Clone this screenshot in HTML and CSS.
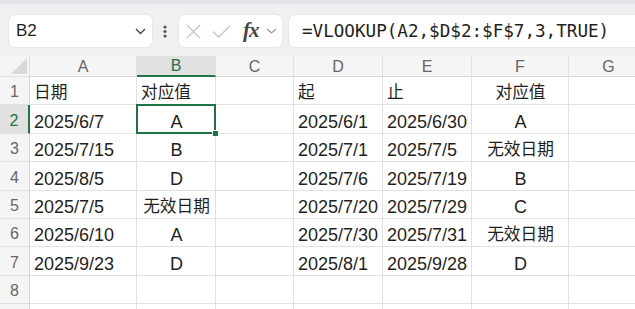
FILE: index.html
```html
<!DOCTYPE html>
<html lang="zh-CN">
<head>
  <meta charset="UTF-8">
  <meta name="viewport" content="width=device-width, initial-scale=1.0">
  <title>VLOOKUP</title>
  <link rel="stylesheet" href="styles.css">
</head>
<body>
  <!-- Formula bar -->
  <div class="toolbar">
    <div class="namebox">
      <span>B2</span>
      <svg width="11" height="7" viewBox="0 0 11 7"><polyline points="1,1 5.5,5.5 10,1" fill="none" stroke="#444" stroke-width="1.3"/></svg>
    </div>
    <svg class="dots" width="4" height="13" viewBox="0 0 4 13"><circle cx="2" cy="2" r="1.6" fill="#555"/><circle cx="2" cy="6.5" r="1.6" fill="#555"/><circle cx="2" cy="11" r="1.6" fill="#555"/></svg>
    <div class="fxbox">
      <svg width="15" height="15" viewBox="0 0 15 15"><path d="M1 1 L14 14 M14 1 L1 14" stroke="#c4c4c4" stroke-width="1.3" fill="none"/></svg>
      <svg width="19" height="13" viewBox="0 0 19 13"><polyline points="1,6.5 6.5,12 18,1" fill="none" stroke="#c4c4c4" stroke-width="1.3"/></svg>
      <span class="fx">fx</span>
      <svg width="11" height="6" viewBox="0 0 11 6"><polyline points="1,1 5.5,5 10,1" fill="none" stroke="#999" stroke-width="1.2"/></svg>
    </div>
    <div class="formula">=VLOOKUP(A2,$D$2:$F$7,3,TRUE)</div>
  </div>

  <!-- Sheet -->
  <div class="sheet">
    <div class="corner"><svg width="16" height="16" viewBox="0 0 16 16"><polygon points="16,0 16,16 0,16" fill="#d9d9d9"/></svg></div>
    <div class="colhead">A</div>
    <div class="colhead sel">B</div>
    <div class="colhead">C</div>
    <div class="colhead">D</div>
    <div class="colhead">E</div>
    <div class="colhead">F</div>
    <div class="colhead">G</div>

    <div class="rowhead">1</div>
    <div class="cell"><span class="zh">日期</span></div>
    <div class="cell"><span class="zh">对应值</span></div>
    <div class="cell"></div>
    <div class="cell"><span class="zh">起</span></div>
    <div class="cell"><span class="zh">止</span></div>
    <div class="cell mid"><span class="zh">对应值</span></div>
    <div class="cell"></div>

    <div class="rowhead sel">2</div>
    <div class="cell">2025/6/7</div>
    <div class="cell mid active">A</div>
    <div class="cell"></div>
    <div class="cell">2025/6/1</div>
    <div class="cell">2025/6/30</div>
    <div class="cell mid">A</div>
    <div class="cell"></div>

    <div class="rowhead">3</div>
    <div class="cell">2025/7/15</div>
    <div class="cell mid">B</div>
    <div class="cell"></div>
    <div class="cell">2025/7/1</div>
    <div class="cell">2025/7/5</div>
    <div class="cell mid"><span class="zh">无效日期</span></div>
    <div class="cell"></div>

    <div class="rowhead">4</div>
    <div class="cell">2025/8/5</div>
    <div class="cell mid">D</div>
    <div class="cell"></div>
    <div class="cell">2025/7/6</div>
    <div class="cell">2025/7/19</div>
    <div class="cell mid">B</div>
    <div class="cell"></div>

    <div class="rowhead">5</div>
    <div class="cell">2025/7/5</div>
    <div class="cell mid"><span class="zh">无效日期</span></div>
    <div class="cell"></div>
    <div class="cell">2025/7/20</div>
    <div class="cell">2025/7/29</div>
    <div class="cell mid">C</div>
    <div class="cell"></div>

    <div class="rowhead">6</div>
    <div class="cell">2025/6/10</div>
    <div class="cell mid">A</div>
    <div class="cell"></div>
    <div class="cell">2025/7/30</div>
    <div class="cell">2025/7/31</div>
    <div class="cell mid"><span class="zh">无效日期</span></div>
    <div class="cell"></div>

    <div class="rowhead">7</div>
    <div class="cell">2025/9/23</div>
    <div class="cell mid">D</div>
    <div class="cell"></div>
    <div class="cell">2025/8/1</div>
    <div class="cell">2025/9/28</div>
    <div class="cell mid">D</div>
    <div class="cell"></div>

    <div class="rowhead">8</div>
    <div class="cell"></div>
    <div class="cell"></div>
    <div class="cell"></div>
    <div class="cell"></div>
    <div class="cell"></div>
    <div class="cell"></div>
    <div class="cell"></div>

    <!-- partly visible row 9 -->
    <div class="rowhead"></div>
    <div class="cell"></div>
    <div class="cell"></div>
    <div class="cell"></div>
    <div class="cell"></div>
    <div class="cell"></div>
    <div class="cell"></div>
    <div class="cell"></div>
  </div>
</body>
</html>
```

FILE: styles.css
```css
html, body {
  margin: 0;
  background: #fff;
  overflow: hidden;
}
body {
  font-family: "Liberation Sans", "Noto Sans CJK SC", sans-serif;
  color: #1f1f1f;
}

/* formula bar */
.toolbar {
  height: 56px;
  box-sizing: border-box;
  background: #eef0f2;
  border-top: 4px solid #e3e5e8;
  padding: 11px 0 9px 9px;
  display: flex;
  align-items: stretch;
}
.namebox, .fxbox, .formula {
  background: #fff;
  border-radius: 6px;
  box-shadow: 0 0 0 1px #e6e7e9;
  display: flex;
  align-items: center;
}
.namebox {
  width: 143px;
  padding: 0 6px 0 7px;
  box-sizing: border-box;
  justify-content: space-between;
  font-size: 17px;
}
.dots {
  align-self: center;
  margin: 0 12px 0 11px;
}
.fxbox {
  width: 103px;
  padding-left: 7px;
  box-sizing: border-box;
}
.fxbox svg:nth-child(2) {
  margin-left: 11px;
}
.fx {
  font-family: "Liberation Serif", serif;
  font-style: italic;
  font-weight: bold;
  font-size: 21px;
  color: #444;
  margin-left: 12px;
  letter-spacing: -1px;
  position: relative;
  top: -1px;
}
.fxbox svg:last-child {
  margin-left: 7px;
}
.formula {
  flex: 1;
  margin-left: 7px;
  margin-right: -10px;
  padding-left: 13px;
  font-family: "DejaVu Sans Mono", monospace;
  font-size: 17.6px;
  color: #1f1f1f;
}

/* grid */
.sheet {
  display: grid;
  grid-template-columns: 30px 107px 79px 78px 89px 89px 97px 80px;
  grid-template-rows: 21px repeat(8, 28.4px) 10px;
}
.sheet > div {
  box-sizing: border-box;
  border-right: 1px solid #e1e1e1;
  border-bottom: 1px solid #e1e1e1;
}
.corner {
  background: #f5f5f5;
  display: flex;
  justify-content: flex-end;
  align-items: flex-end;
  padding: 0 2px 2px 0;
}
.colhead, .rowhead {
  background: #f5f5f5;
  color: #666;
  font-size: 16px;
  display: flex;
  justify-content: center;
}
.colhead {
  align-items: flex-end;
  line-height: 18px;
  border-bottom-color: #d4d4d4 !important;
}
.rowhead {
  align-items: flex-end;
  line-height: 20px;
  padding-bottom: 2px;
  border-right-color: #d4d4d4 !important;
}
.colhead.sel {
  background: #e1e1e1;
  color: #217346;
  border-bottom: 2px solid #217346 !important;
}
.rowhead.sel {
  background: #e1e1e1;
  color: #217346;
  border-right: 2px solid #217346 !important;
}
.cell {
  font-size: 18px;
  line-height: 20px;
  padding: 0 3px 1px 4px;
  display: flex;
  align-items: flex-end;
  white-space: nowrap;
}
.cell.mid {
  justify-content: center;
}
.zh {
  font-size: 16.7px;
}
.active {
  position: relative;
}
.active::after {
  content: "";
  position: absolute;
  top: -1px;
  left: -1px;
  right: -1px;
  bottom: -1px;
  border: 2px solid #217346;
}
.active::before {
  content: "";
  position: absolute;
  right: -4px;
  bottom: -4px;
  width: 5px;
  height: 5px;
  background: #217346;
  border: 1px solid #fff;
  z-index: 1;
}
```
